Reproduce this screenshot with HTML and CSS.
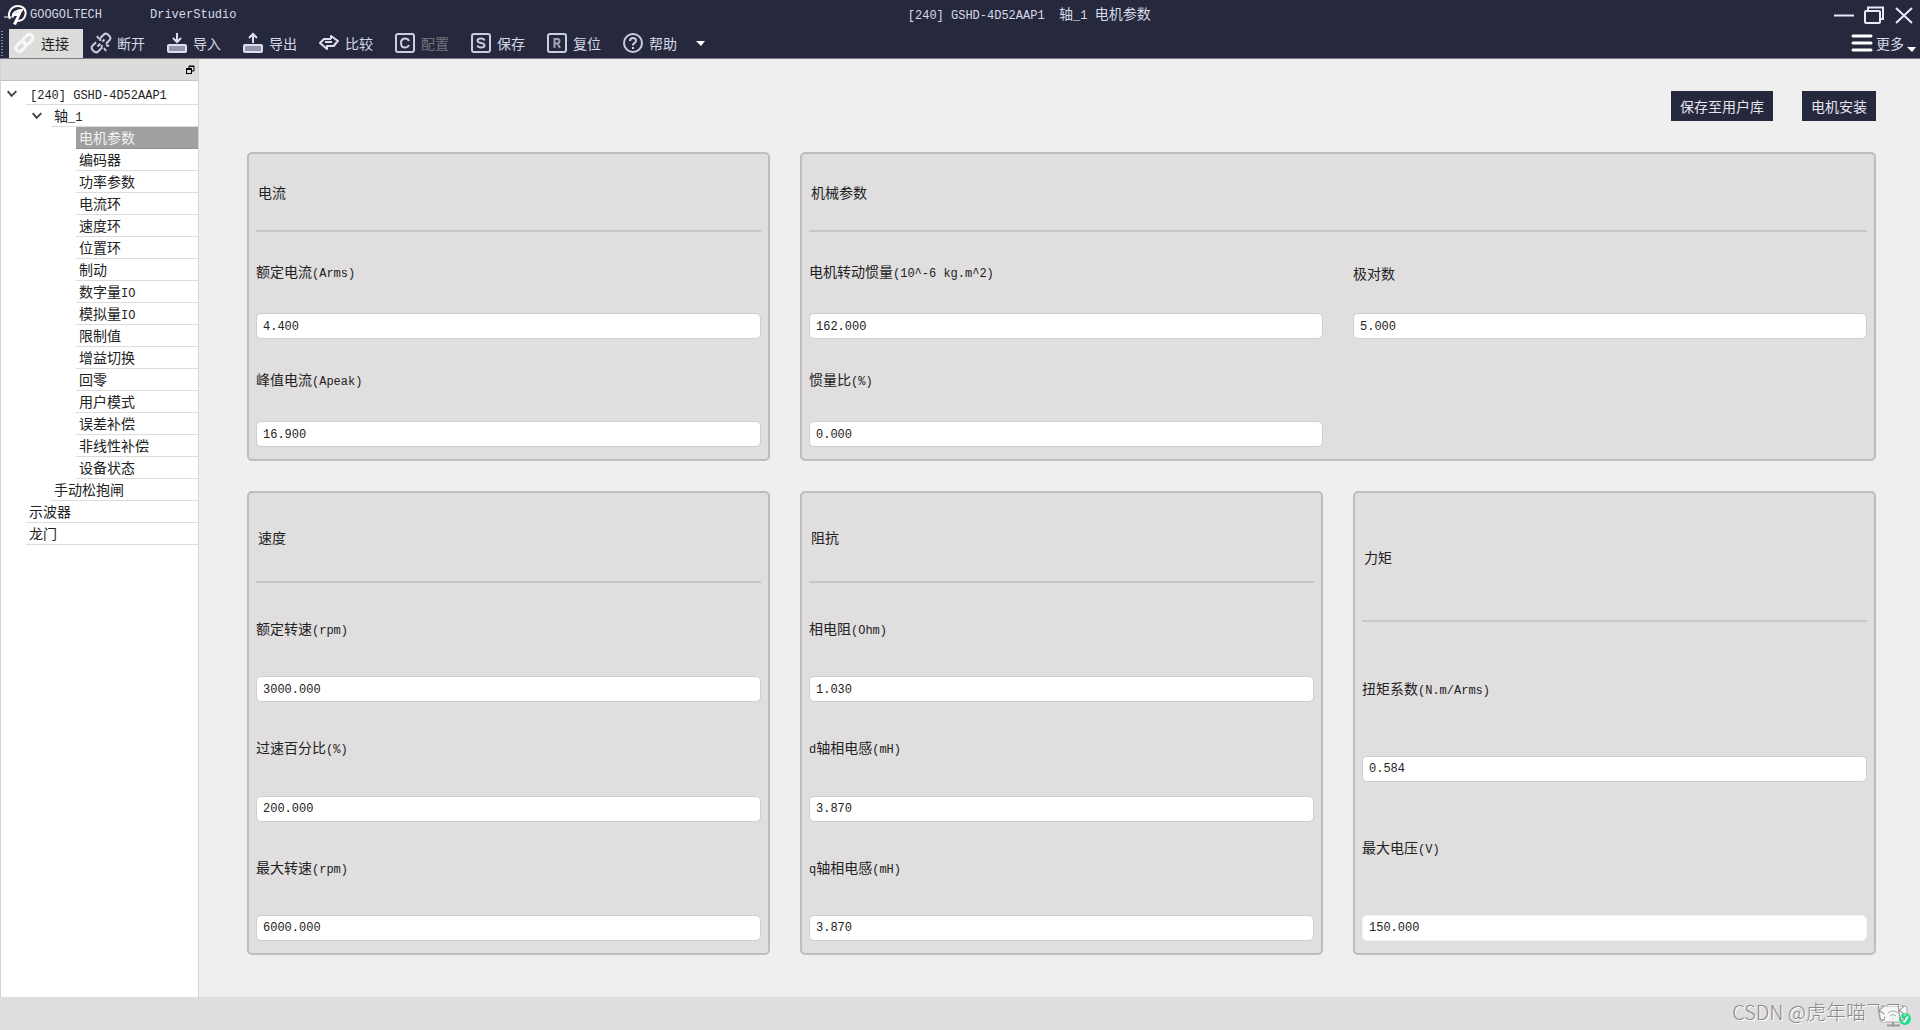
FILE: index.html
```html
<!DOCTYPE html>
<html lang="zh-CN">
<head>
<meta charset="utf-8">
<title>DriverStudio</title>
<link rel="stylesheet" href="styles.css">
</head>
<body>
<header class="top">
  <div class="titlebar">
    <svg class="logo" viewBox="0 0 24 22" width="24" height="22" fill="none" stroke="#fff" stroke-width="2">
      <path d="M6 15C3 9 7 2 14 2C20 2 23 7 21 12C20 15 17 17 13 17"/>
      <path d="M0 13H10" stroke-width="1"/>
      <path d="M9 13C8 9 12 6 19 6" stroke-width="2"/>
      <path d="M19 5L12 21L9 20L13 12H8L10 10Z" fill="#fff" stroke="none"/>
    </svg>
    <span class="lat brand">GOOGOLTECH</span>
    <span class="lat">DriverStudio</span>
    <h1 class="caption"><span class="lat">[240] GSHD-4D52AAP1&nbsp; </span>轴<span class="lat">_1 </span>电机参数</h1>
    <div class="window-controls">
      <button type="button" aria-label="最小化"><svg width="22" height="22" stroke="#e8ebf5" stroke-width="2" fill="none"><path d="M1 11.500H21"/></svg></button>
      <button type="button" aria-label="还原"><svg width="22" height="22" stroke="#e8ebf5" stroke-width="2" fill="none"><rect x="2" y="7" width="15" height="12" rx="1"/><path d="M5 6V3.500H20V15H18"/></svg></button>
      <button type="button" aria-label="关闭"><svg width="22" height="22" stroke="#e8ebf5" stroke-width="2" fill="none"><path d="M3 4L19 19M19 4L3 19"/></svg></button>
    </div>
  </div>
  <nav class="toolbar">
    <span class="grip"></span>
    <button type="button" class="tool active"><svg width="20" height="20" fill="none" stroke="#f8f8f8" stroke-width="3"><g transform="rotate(-45 10 10)"><rect x="-1" y="6" width="11" height="7" rx="3"/><rect x="9" y="6" width="11" height="7" rx="3"/></g></svg>连接</button>
    <button type="button" class="tool"><svg width="20" height="20" fill="none" stroke="#c9cddf" stroke-width="2"><g transform="rotate(-45 10 10)"><path d="M7 6H2Q-1 6-1 10T2 14H7L9 12M13 6H18Q21 6 21 10T18 14H13M13 6L11 8M5 10H9M12 10H15"/></g><path d="M6 3L8 6M13 15L15 18M15 12L18 13"/></svg>断开</button>
    <button type="button" class="tool"><svg width="20" height="20" fill="none" stroke="#dce0ee" stroke-width="2"><rect x="1" y="12" width="18" height="7" rx="1" fill="#9095a9"/><path d="M10 0V9M6 5L10 9L14 5"/></svg>导入</button>
    <button type="button" class="tool"><svg width="20" height="20" fill="none" stroke="#dce0ee" stroke-width="2"><rect x="1" y="12" width="18" height="7" rx="1" fill="#9095a9"/><path d="M10 10V1M6 5L10 1L14 5"/></svg>导出</button>
    <button type="button" class="tool"><svg width="20" height="20" fill="none" stroke="#dce0ee" stroke-width="2" stroke-linejoin="round"><path d="M12 6V3L19 8L15 12M12 6H5L1 10L8 16V13H15L18 9M6 9H13"/></svg>比较</button>
    <button type="button" class="tool" disabled><svg width="20" height="20" fill="none" stroke="#c9cddf" stroke-width="2"><rect x="1" y="1" width="18" height="18" rx="2"/><path d="M14 8Q13 5.500 10 5.500Q6 5.500 6 10T10 14.500Q13 14.500 14 12"/></svg>配置</button>
    <button type="button" class="tool"><svg width="20" height="20" fill="none" stroke="#c9cddf" stroke-width="2"><rect x="1" y="1" width="18" height="18" rx="2"/><path d="M13.500 7.500Q13 5.500 10 5.500Q6.500 5.500 6.500 7.500Q6.500 9.500 10 10Q13.500 10.500 13.500 12.500Q13.500 14.500 10 14.500Q7 14.500 6.500 12.500"/></svg>保存</button>
    <button type="button" class="tool"><svg width="20" height="20" fill="none" stroke="#c9cddf" stroke-width="2"><rect x="1" y="1" width="18" height="18" rx="2"/><path stroke="#9da2b6" d="M7.500 15V6H10.500Q12.500 6 12.500 8T10.500 10.500H7.500M10.500 10.500L13 15"/></svg>复位</button>
    <button type="button" class="tool"><svg width="20" height="20" fill="none" stroke="#c9cddf" stroke-width="2"><circle cx="10" cy="10" r="9"/><path d="M7 8Q7 5 10 5T13 8Q13 9 11 10.500Q10 11 10 12.500M10 14V16"/></svg>帮助</button>
    <button type="button" class="drop" aria-label="帮助菜单"><svg width="9" height="6"><path d="M0 0H9L5 5Z" fill="#fff"/></svg></button>
    <button type="button" class="more"><svg width="22" height="20" stroke="#fff" stroke-width="3" stroke-linecap="round"><path d="M2 3H20M2 10H20M2 17H20"/></svg>更多<svg class="more-arrow" width="9" height="6"><path d="M0 0H9L5 5Z" fill="#fff"/></svg></button>
  </nav>
</header>
<div class="workspace">
  <aside class="sidebar">
    <div class="dock"><button type="button" aria-label="浮动"><svg width="9" height="9" fill="none" stroke="#000"><path d="M3 3V1H8V6H6M3 1.500H8"/><rect x=".5" y="3.500" width="5" height="5"/><path d="M0 4.500H6"/></svg></button></div>
    <ul class="tree">
      <li><svg class="twist" viewBox="0 0 26 12"><path d="M7 3L11 8L16 3"/></svg><a href="#" class="node"><span class="lat">[240] GSHD-4D52AAP1</span></a></li>
      <li class="l1"><svg class="twist" viewBox="0 0 26 12"><path d="M7 3L11 8L16 3"/></svg><a href="#">轴<span class="lat">_1</span></a></li>
      <li class="l2"><a href="#" class="selected">电机参数</a></li>
      <li class="l2"><a href="#">编码器</a></li>
      <li class="l2"><a href="#">功率参数</a></li>
      <li class="l2"><a href="#">电流环</a></li>
      <li class="l2"><a href="#">速度环</a></li>
      <li class="l2"><a href="#">位置环</a></li>
      <li class="l2"><a href="#">制动</a></li>
      <li class="l2"><a href="#">数字量<span class="lat">IO</span></a></li>
      <li class="l2"><a href="#">模拟量<span class="lat">IO</span></a></li>
      <li class="l2"><a href="#">限制值</a></li>
      <li class="l2"><a href="#">增益切换</a></li>
      <li class="l2"><a href="#">回零</a></li>
      <li class="l2"><a href="#">用户模式</a></li>
      <li class="l2"><a href="#">误差补偿</a></li>
      <li class="l2"><a href="#">非线性补偿</a></li>
      <li class="l2"><a href="#">设备状态</a></li>
      <li class="leaf1"><a href="#">手动松抱闸</a></li>
      <li class="leaf0"><a href="#">示波器</a></li>
      <li class="leaf0"><a href="#">龙门</a></li>
    </ul>
  </aside>
  <main class="content">
    <div class="actions">
      <button type="button">保存至用户库</button>
      <button type="button">电机安装</button>
    </div>
    <div class="panels">
      <section class="panel">
        <h2>电流</h2>
        <hr>
        <div class="field"><label for="rated-current">额定电流<span class="lat">(Arms)</span></label><input id="rated-current" type="text" value="4.400"></div>
        <div class="field"><label for="peak-current">峰值电流<span class="lat">(Apeak)</span></label><input id="peak-current" type="text" value="16.900"></div>
      </section>
      <section class="panel wide">
        <h2>机械参数</h2>
        <hr>
        <div class="pair">
          <div class="field"><label for="inertia">电机转动惯量<span class="lat">(10^-6 kg.m^2)</span></label><input id="inertia" type="text" value="162.000"></div>
          <div class="field"><label for="poles">极对数</label><input id="poles" type="text" value="5.000"></div>
        </div>
        <div class="pair">
          <div class="field"><label for="ratio">惯量比<span class="lat">(%)</span></label><input id="ratio" type="text" value="0.000"></div>
        </div>
      </section>
      <section class="panel">
        <h2>速度</h2>
        <hr>
        <div class="field"><label for="rated-speed">额定转速<span class="lat">(rpm)</span></label><input id="rated-speed" type="text" value="3000.000"></div>
        <div class="field"><label for="overspeed">过速百分比<span class="lat">(%)</span></label><input id="overspeed" type="text" value="200.000"></div>
        <div class="field"><label for="max-speed">最大转速<span class="lat">(rpm)</span></label><input id="max-speed" type="text" value="6000.000"></div>
      </section>
      <section class="panel">
        <h2>阻抗</h2>
        <hr>
        <div class="field"><label for="resistance">相电阻<span class="lat">(Ohm)</span></label><input id="resistance" type="text" value="1.030"></div>
        <div class="field"><label for="d-ind"><span class="lat">d</span>轴相电感<span class="lat">(mH)</span></label><input id="d-ind" type="text" value="3.870"></div>
        <div class="field"><label for="q-ind"><span class="lat">q</span>轴相电感<span class="lat">(mH)</span></label><input id="q-ind" type="text" value="3.870"></div>
      </section>
      <section class="panel">
        <h2>力矩</h2>
        <hr>
        <div class="field"><label for="torque">扭矩系数<span class="lat">(N.m/Arms)</span></label><input id="torque" type="text" value="0.584"></div>
        <div class="field"><label for="max-voltage">最大电压<span class="lat">(V)</span></label><input id="max-voltage" class="plain" type="text" value="150.000"></div>
      </section>
    </div>
  </main>
</div>
<footer class="status">
  <svg class="link-state" width="34" height="24" fill="none">
    <rect x="2" y="2" width="27" height="16" rx="2" fill="#f6f6f6" stroke="#aaa"/>
    <path d="M15 18V21M9 21.500H22" stroke="#999" stroke-width="2"/>
    <path d="M10 9Q15 5 20 9M12 12Q15 9 18 12M15 14V15" stroke="#aaa"/>
    <circle cx="27" cy="15" r="6" fill="#1fdf8a"/>
    <path d="M24 15L26.500 17.500L30 12.500" stroke="#fff" stroke-width="2"/>
  </svg>
  <span class="credit">CSDN @虎年喵飞飞</span>
</footer>
</body>
</html>
```
FILE: styles.css
```css
* { box-sizing: border-box; }

body {
  margin: 0;
  min-height: 100vh;
  display: flex;
  flex-direction: column;
  background: #efefef;
  color: #222;
  font: 14px/20px "Noto Sans CJK SC", sans-serif;
}

button, input { font: inherit; color: inherit; }
button { border: 0; padding: 0; background: none; }
svg { flex: none; overflow: visible; }
a { color: inherit; text-decoration: none; }

.lat, input {
  font-family: "Liberation Mono", monospace;
  font-size: 12px;
}

/* title bar and toolbar */
.top {
  background: #26293d;
  color: #d6d9e6;
  border-bottom: 1px solid #777a85;
}

.titlebar {
  display: flex;
  align-items: center;
  height: 29px;
  padding: 0 5px 0 4px;
}
.brand { margin: 0 48px 0 2px; }
.caption {
  flex: 1;
  margin: 0;
  padding-right: 11px;
  font-size: 14px;
  font-weight: 400;
  text-align: center;
}
.window-controls { display: flex; gap: 8px; }
.window-controls svg { display: block; }

.toolbar {
  display: flex;
  align-items: center;
  height: 29px;
}
.grip {
  width: 2px;
  height: 26px;
  margin: 0 6px 0 1px;
  background: repeating-linear-gradient(#8d90a0 0 1px, transparent 1px 3px);
}
.tool {
  display: flex;
  align-items: center;
  gap: 6px;
  width: 74px;
  height: 29px;
  margin-right: 2px;
  padding: 0 0 1px 6px;
}
.tool.active { background: #dcdcdb; color: #222; }
.tool:disabled { color: #70747f; }
.drop { margin-left: 3px; }
.drop svg { display: block; }
.more {
  display: flex;
  align-items: center;
  gap: 3px;
  margin-left: auto;
  padding: 0 4px 1px 0;
}
.more-arrow { align-self: flex-end; }

/* navigation tree */
.workspace { display: flex; flex: 1; }
.sidebar {
  flex: none;
  width: 199px;
  background: #fff;
  border: 1px solid #d2d2d2;
  border-width: 0 1px;
}
.dock {
  display: flex;
  align-items: center;
  justify-content: flex-end;
  height: 22px;
  padding-right: 3px;
  background: #dcdcda;
  border-bottom: 1px solid #c4c4c4;
}
.dock svg { display: block; }
.tree { list-style: none; margin: 0; padding: 2px 0 0; }
.tree li { display: flex; align-items: center; height: 22px; }
.tree a {
  flex: 1;
  height: 22px;
  padding-left: 3px;
  line-height: 21px;
  border-bottom: 1px solid #dcdcdc;
}
.tree .node { padding-left: 4px; }
.tree .selected { background: #a0a0a0; border-color: #909090; color: #f2f2f2; }
.tree .l1 { padding-left: 25px; }
.tree .l2 { padding-left: 75px; }
.tree .leaf1 { padding-left: 50px; }
.tree .leaf0 { padding-left: 25px; }
.twist { width: 25px; height: 12px; fill: none; stroke: #444; stroke-width: 2; }

/* parameter panels */
.content {
  flex: 1;
  display: flex;
  flex-direction: column;
  gap: 31px;
  padding: 32px 44px 42px 48px;
}
.actions { display: flex; justify-content: flex-end; gap: 29px; }
.actions button {
  height: 30px;
  padding: 0 9px;
  background: #26293d;
  color: #e4e6ef;
}
.panels {
  flex: 1;
  display: grid;
  grid-template-columns: repeat(3, minmax(0, 1fr));
  grid-template-rows: 2fr 3fr;
  gap: 30px;
}
.panel {
  display: flex;
  flex-direction: column;
  gap: 7px;
  padding: 7px 7px 12px;
  background: #e0dedf;
  border: 2px solid #bdbdbd;
  border-radius: 5px;
}
.wide { grid-column: span 2; }
.panel h2 {
  flex: 1 1 0;
  display: flex;
  align-items: center;
  margin: 0;
  padding-left: 2px;
  font-size: 14px;
  font-weight: 400;
}
.panel hr { width: 100%; height: 2px; margin: 0; border: 0; background: #c8c7c8; }
.field {
  flex: 1 1 39px;
  display: flex;
  flex-direction: column;
  gap: 7px;
}
.field label { margin: auto 0; }
.field .lat { white-space: pre; }
.field input {
  width: 100%;
  height: 26px;
  padding: 1px 6px 0;
  background: #fff;
  border: 1px solid #cfcfcf;
  border-radius: 5px;
}
.field .plain { border-color: #f4f4f4; }
.pair {
  flex: 1 1 39px;
  display: grid;
  grid-template-columns: repeat(2, minmax(0, 1fr));
  gap: 30px;
}

/* status bar */
.status {
  position: relative;
  display: flex;
  align-items: center;
  justify-content: flex-end;
  height: 33px;
  padding-right: 14px;
  background: #e0ddde;
}
.credit {
  position: relative;
  color: #8a8a8a;
  font-size: 20px;
  font-weight: 300;
  line-height: 28px;
  padding-bottom: 4px;
  text-shadow: 1px 1px 0 #fff;
}
.link-state { position: absolute; right: 8px; bottom: 2px; }
```
